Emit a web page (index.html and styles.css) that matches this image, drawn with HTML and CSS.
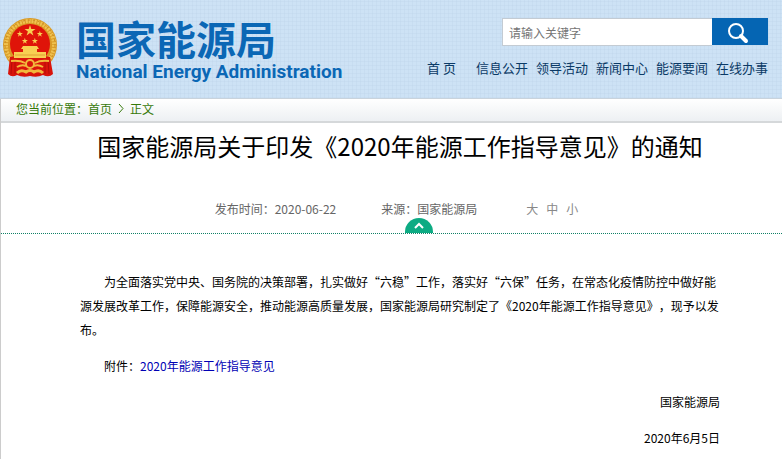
FILE: index.html
```html
<!DOCTYPE html>
<html lang="zh-CN">
<head>
    <meta charset="UTF-8">
    <meta name="viewport" content="width=device-width, initial-scale=1.0">
    <title>国家能源局关于印发《2020年能源工作指导意见》的通知</title>
    <link rel="stylesheet" href="styles.css">
</head>
<body>
    <header class="header">
        <a class="logo" href="#">
            <svg class="emblem" viewBox="0 0 54 60" aria-hidden="true">
                <circle cx="27" cy="27" r="27" fill="#d99a26"/>
                <circle cx="27" cy="27" r="24" fill="none" stroke="#f0c250" stroke-width="4" stroke-dasharray="2 1"/>
                <circle cx="27" cy="27" r="25" fill="none" stroke="#c98a22" stroke-width="1" stroke-dasharray="2 3"/>
                <circle cx="27" cy="26" r="20" fill="#df1409"/>
                <path d="M7 39 Q27 34 47 39 L50 56 Q46 60 40 57 Q34 60 27 58 Q20 60 14 57 Q9 60 5 56 Z" fill="#d9140b"/>
                <path d="M9 42 L8 56 M45 42 L46 56 M12 44 V56 M42 44 V56" stroke="#b50d08" stroke-width="1"/>
                <g fill="#f8cf52">
                    <path id="star" d="M27 7 L28.3 11 L32.5 11 L29.1 13.500 L30.400 17.500 L27 15 L23.600 17.500 L24.900 13.500 L21.500 11 L25.700 11 Z"/>
                    <use href="#star" transform="translate(2 9) scale(.55)"/>
                    <use href="#star" transform="translate(22 9) scale(.55)"/>
                    <use href="#star" transform="translate(7 16) scale(.55)"/>
                    <use href="#star" transform="translate(17 16) scale(.55)"/>
                    <path d="M20 28 L34 28 L36 31 L18 31 Z M20 31 H34 V34 H20 Z M11 34 H43 V40 H11 Z"/>
                </g>
                <path d="M12 37 h30" stroke="#e2a035" stroke-width="1"/>
                <g fill="none" stroke="#f2b83c">
                    <path d="M8 43 Q17 42 22 45 M32 45 Q37 42 46 43" stroke-width="2"/>
                    <path d="M14 49 Q19 46 23 48 M40 49 Q35 46 31 48" stroke-width="2"/>
                    <circle cx="27" cy="46" r="4" stroke-width="2"/>
                    <path d="M14 55 Q18 51 23 54 Q27 51 31 54 Q36 51 40 55" stroke-width="3"/>
                </g>
            </svg>
            <span class="logo-text">
                <span class="logo-cn">国家能源局</span>
                <span class="logo-en">National Energy Administration</span>
            </span>
        </a>
        <div class="header-right">
            <form class="search">
                <input class="search-input" type="text" placeholder="请输入关键字" aria-label="请输入关键字">
                <button class="search-btn" type="button" aria-label="搜索">
                    <svg width="22" height="22" viewBox="0 0 22 22" aria-hidden="true">
                        <circle cx="9" cy="9" r="7" fill="none" stroke="#fff" stroke-width="2"/>
                        <path d="M14 14 L19 19" stroke="#fff" stroke-width="4" stroke-linecap="round"/>
                    </svg>
                </button>
            </form>
            <nav class="nav">
                <a class="nav-home" href="#">首 页</a>
                <a href="#">信息公开</a>
                <a href="#">领导活动</a>
                <a href="#">新闻中心</a>
                <a href="#">能源要闻</a>
                <a href="#">在线办事</a>
            </nav>
        </div>
    </header>
    <main class="main">
        <div class="crumb">您当前位置：<a href="#">首页</a><svg width="6" height="9" viewBox="0 0 6 9" aria-hidden="true"><path d="M1 0 L5 4.500 L1 9" fill="none" stroke="#37790a"/></svg><a href="#">正文</a></div>
        <h1 class="title">国家能源局关于印发《2020年能源工作指导意见》的通知</h1>
        <div class="info">
            <span>发布时间：2020-06-22</span>
            <span>来源：国家能源局</span>
            <span class="sizes"><a href="#">大</a><a href="#">中</a><a href="#">小</a></span>
            <button class="fold" type="button" aria-label="收起">
                <svg width="10" height="7" viewBox="0 0 10 7" aria-hidden="true"><path d="M1 6 L5 2 L9 6" fill="none" stroke="#fff" stroke-width="2"/></svg>
            </button>
        </div>
        <article class="article">
            <p>为全面落实党中央、国务院的决策部署，扎实做好“六稳”工作，落实好“六保”任务，在常态化疫情防控中做好能源发展改革工作，保障能源安全，推动能源高质量发展，国家能源局研究制定了《2020年能源工作指导意见》，现予以发布。</p>
            <p>附件：<a href="#">2020年能源工作指导意见</a></p>
            <p class="sign">国家能源局</p>
            <p class="sign">2020年6月5日</p>
        </article>
    </main>
</body>
</html>
```

FILE: styles.css
```css
* {
    box-sizing: border-box;
}

body {
    display: flex;
    flex-direction: column;
    min-height: 100vh;
    margin: 0;
    background: #fff;
    color: #000;
    font-family: "Noto Sans CJK SC", sans-serif;
    font-size: 12px;
    line-height: 24px;
    text-spacing-trim: space-all;
}

a {
    color: inherit;
    text-decoration: none;
}

/* header */
.header {
    display: flex;
    justify-content: space-between;
    height: 99px;
    padding: 18px 14px 0 3px;
    background-color: #cde2f5;
    background-image:
        repeating-linear-gradient(90deg, rgba(170, 195, 220, 0.15) 0 1px, transparent 1px 4px),
        repeating-linear-gradient(0deg, rgba(170, 195, 220, 0.15) 0 1px, transparent 1px 4px);
    border-bottom: 1px solid #c9d3dc;
}

.logo {
    display: flex;
    gap: 19px;
    color: #0b67b5;
    font-weight: bold;
}

.emblem {
    width: 54px;
    height: 60px;
}

.logo-cn,
.logo-en {
    display: block;
    white-space: nowrap;
}

.logo-cn {
    font-size: 40px;
    line-height: 40px;
}

.logo-en {
    padding-top: 4px;
    font-family: Roboto, "Liberation Sans", Arial, sans-serif;
    font-size: 19px;
    line-height: 20px;
}

.search {
    display: flex;
    width: 266px;
    margin: 0 0 12px auto;
}

.search-input {
    flex: 1;
    min-width: 0;
    height: 28px;
    padding: 0 6px;
    border: 1px solid #c3cbd3;
    border-right: 0;
    font-family: inherit;
    font-size: 12px;
}

.search-input::placeholder {
    color: #757575;
}

.search-btn {
    width: 56px;
    height: 27px;
    padding: 2px 4px 0 0;
    border: 0;
    background: #0565b3;
    line-height: 0;
}

.nav {
    display: flex;
    gap: 8px;
    color: #0b3a66;
    font-size: 13px;
    line-height: 20px;
    white-space: nowrap;
}

.nav-home {
    margin-right: 12px;
}

/* content */
.main {
    flex: 1;
    border-left: 1px solid #ccc;
}

.crumb {
    display: flex;
    align-items: center;
    height: 24px;
    padding: 0 15px 3px;
    border-bottom: 2px solid #d5d8da;
    background: linear-gradient(#fff, #edf0f3);
    color: #37790a;
}

.crumb svg {
    margin: 0 6px;
}

.title {
    margin: 0;
    padding: 7px 62px 0 79px;
    font-size: 24px;
    font-weight: normal;
    line-height: 32px;
    text-align: center;
}

.info {
    position: relative;
    display: flex;
    justify-content: center;
    gap: 45px;
    margin-top: 35px;
    padding: 0 50px 12px 60px;
    border-bottom: 1px dotted #118066;
    color: #666;
}

.sizes {
    display: flex;
    gap: 8px;
    margin-left: 4px;
    color: #888;
}

.fold {
    position: absolute;
    bottom: 0;
    left: 50%;
    width: 28px;
    height: 15px;
    margin-left: 13px;
    padding: 0;
    border: 0;
    border-radius: 14px 14px 0 0;
    background: #0dab83;
    line-height: 0;
}

.article {
    padding: 36px 62px 0 79px;
}

.article p {
    margin: 0 0 12px;
    text-indent: 2em;
}

.article a {
    color: #0000b4;
}

.article .sign {
    text-align: right;
}

.article p:last-child {
    margin-bottom: 0;
}
```
